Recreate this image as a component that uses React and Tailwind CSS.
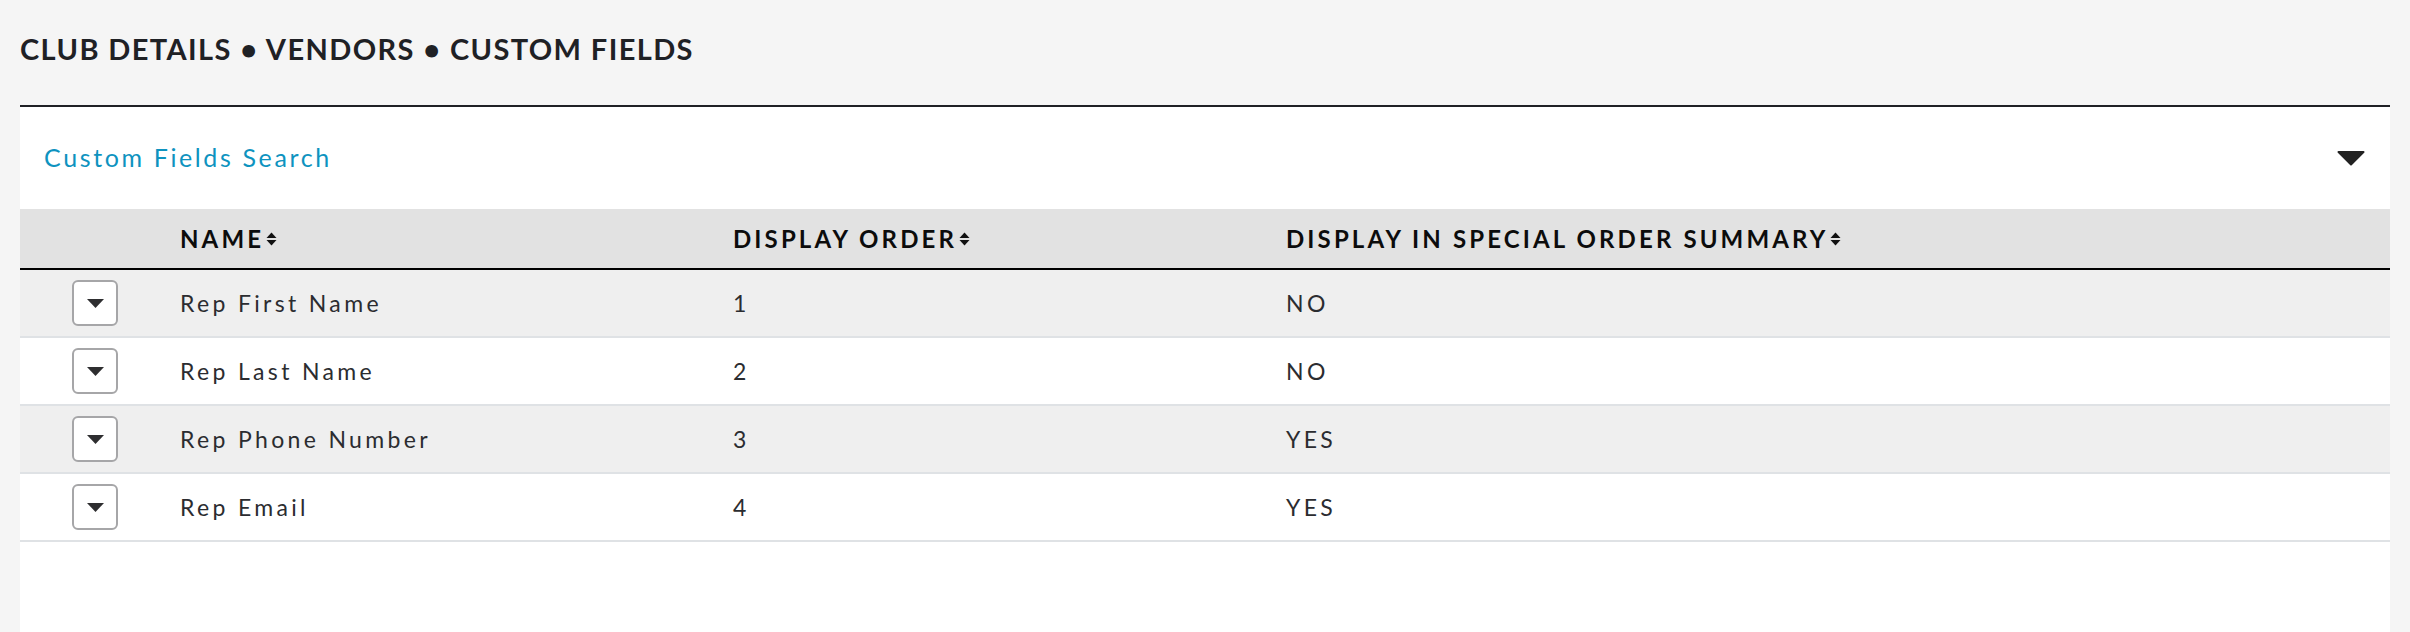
import React from 'react';

const rows = [
  { name: 'Rep First Name', order: 1, summary: 'NO' },
  { name: 'Rep Last Name', order: 2, summary: 'NO' },
  { name: 'Rep Phone Number', order: 3, summary: 'YES' },
  { name: 'Rep Email', order: 4, summary: 'YES' },
];

const SortIcon = () => (
  <svg width="11" height="14" viewBox="0 0 11 14" className="ml-[2px] inline-block">
    <path d="M5.5 0.5 L10.5 6 L0.5 6 Z" fill="#111" />
    <path d="M5.5 13.5 L10.5 8 L0.5 8 Z" fill="#111" />
  </svg>
);

const cols = 'grid grid-cols-[160px_553px_553px_1fr] items-center';
const th = 'flex items-center text-[24px] font-bold tracking-[0.13em] text-[#0c0c0c]';
const td = 'text-[23px] tracking-[0.145em] text-[#2b2c30]';

export default function App() {
  return (
    <div className="min-h-[632px] bg-[#f5f5f5] font-['Lato',sans-serif]">
      <div className="px-[20px] pt-[29px]">
        <h1 className="text-[29px] font-bold tracking-[0.048em] text-[#1f2125] leading-[40px]">
          CLUB DETAILS • VENDORS • CUSTOM FIELDS
        </h1>

        <div className="mt-[36px] bg-white border-t-2 border-[#1f2125] min-h-[527px]">
          <div className="flex items-center justify-between h-[102px] pl-[24px] pr-[25px]">
            <span className="text-[25px] tracking-[0.105em] text-[#0e93bf]">Custom Fields Search</span>
            <svg width="28" height="15" viewBox="0 0 28 15">
              <path d="M1.5 1 L26.5 1 L14 13.5 Z" fill="#222" stroke="#222" strokeWidth="2" strokeLinejoin="round" />
            </svg>
          </div>

          <div className={`${cols} h-[61px] bg-[#e2e2e2] border-b-2 border-black`}>
            <div />
            <div className={th}>NAME<SortIcon /></div>
            <div className={th}>DISPLAY ORDER<SortIcon /></div>
            <div className={th}>DISPLAY IN SPECIAL ORDER SUMMARY<SortIcon /></div>
          </div>

          {rows.map((r, i) => (
            <div
              key={r.name}
              className={`${cols} h-[68px] border-b-2 border-[#dfe2e5] ${i % 2 === 0 ? 'bg-[#efefef]' : 'bg-white'}`}
            >
              <div className="pl-[52px]">
                <button className="w-[46px] h-[46px] rounded-[6px] border-2 border-[#a6a6a8] bg-white flex items-center justify-center">
                  <svg width="17" height="9" viewBox="0 0 17 9">
                    <path d="M0 0 L17 0 L8.5 9 Z" fill="#2e2e30" />
                  </svg>
                </button>
              </div>
              <div className={td}>{r.name}</div>
              <div className={td}>{r.order}</div>
              <div className={td}>{r.summary}</div>
            </div>
          ))}
        </div>
      </div>
    </div>
  );
}
